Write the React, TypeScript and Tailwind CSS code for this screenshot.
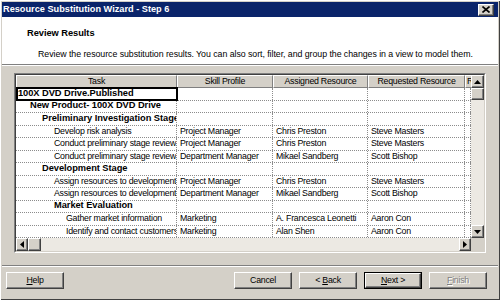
import React from 'react'

type Row = {
  task: string
  level: number
  bold?: boolean
  selected?: boolean
  skill?: string
  assigned?: string
  requested?: string
}

const rows: Row[] = [
  { task: '100X DVD Drive.Published', level: 0, bold: true, selected: true },
  { task: 'New Product- 100X DVD Drive', level: 1, bold: true },
  { task: 'Preliminary Investigation Stage', level: 2, bold: true },
  { task: 'Develop risk analysis', level: 3, skill: 'Project Manager', assigned: 'Chris Preston', requested: 'Steve Masters' },
  { task: 'Conduct preliminary stage review', level: 3, skill: 'Project Manager', assigned: 'Chris Preston', requested: 'Steve Masters' },
  { task: 'Conduct preliminary stage review', level: 3, skill: 'Department Manager', assigned: 'Mikael Sandberg', requested: 'Scott Bishop' },
  { task: 'Development Stage', level: 2, bold: true },
  { task: 'Assign resources to development', level: 3, skill: 'Project Manager', assigned: 'Chris Preston', requested: 'Steve Masters' },
  { task: 'Assign resources to development', level: 3, skill: 'Department Manager', assigned: 'Mikael Sandberg', requested: 'Scott Bishop' },
  { task: 'Market Evaluation', level: 3, bold: true },
  { task: 'Gather market information', level: 4, skill: 'Marketing', assigned: 'A. Francesca Leonetti', requested: 'Aaron Con' },
  { task: 'Identify and contact customers', level: 4, skill: 'Marketing', assigned: 'Alan Shen', requested: 'Aaron Con' },
]

const indent = ['pl-[2px]', 'pl-[14px]', 'pl-[26px]', 'pl-[38px]', 'pl-[50px]']

// regular Tahoma-ish text, bold variant is a touch wider
const reg = 'text-[8.8px] tracking-[-0.25px]'
const bld = 'font-bold text-[9.3px] tracking-[-0.05px]'

const raised =
  'bg-[#d4d0c8] border border-t-white border-l-white border-r-[#404040] border-b-[#404040] shadow-[inset_-1px_-1px_0_#808080]'

function Arrow({ dir }: { dir: 'up' | 'down' | 'left' | 'right' }) {
  const pts = {
    up: '0,4 3.5,0 7,4',
    down: '0,0 3.5,4 7,0',
    left: '4,0 0,3.5 4,7',
    right: '0,0 4,3.5 0,7',
  }[dir]
  const vertical = dir === 'up' || dir === 'down'
  return (
    <svg width={vertical ? 7 : 4} height={vertical ? 4 : 7} viewBox={vertical ? '0 0 7 4' : '0 0 4 7'}>
      <polygon points={pts} fill="#000" />
    </svg>
  )
}

function Cell({ w, children, bold, className = '' }: { w: string; children?: React.ReactNode; bold?: boolean; className?: string }) {
  return (
    <div
      className={`${w} h-full shrink-0 overflow-hidden whitespace-nowrap border-r border-dotted border-r-[#8c8c8c] flex items-center ${
        bold ? bld : reg
      } ${className}`}
    >
      {children}
    </div>
  )
}

function HeaderCell({ w, label }: { w: string; label: string }) {
  return (
    <div className={`${w} h-full shrink-0 overflow-hidden whitespace-nowrap flex items-center justify-center ${reg} bg-[#d4d0c8] border-t border-l border-t-white border-l-white border-r border-b border-r-[#808080] border-b-[#808080]`}>
      {label}
    </div>
  )
}

function Button({ children, isDefault, disabled }: { children: React.ReactNode; isDefault?: boolean; disabled?: boolean }) {
  const inner = (
    <div
      className={`${raised} h-full w-full flex items-center justify-center ${reg} ${
        disabled ? 'text-[#808080] [text-shadow:1px_1px_0_#ffffff]' : 'text-black'
      }`}
    >
      <span className="whitespace-pre">{children}</span>
    </div>
  )
  if (isDefault) {
    return <div className="w-[58px] h-[17px] border border-black">{inner}</div>
  }
  return <div className="w-[58px] h-[17px]">{inner}</div>
}

export default function App() {
  return (
    <div
      className="w-[500px] h-[300px] bg-[#d4d0c8] p-[2px] flex flex-col overflow-hidden text-black shadow-[inset_1px_1px_0_#ffffff,inset_-1px_-1px_0_#404040]"
      style={{ fontFamily: '"Liberation Sans", Arial, sans-serif' }}
    >
      {/* Title bar */}
      <div className="h-[15px] shrink-0 bg-[#0a246a] flex items-center justify-between pl-[1px] pr-[4px]">
        <span className="text-white font-bold text-[9.2px] leading-none">Resource Substitution Wizard - Step 6</span>
        <div className={`${raised} w-[16px] h-[12px] flex items-center justify-center`}>
          <svg width="8" height="7" viewBox="0 0 8 7">
            <path d="M0.5 0.5 L7.5 6.5 M7.5 0.5 L0.5 6.5" stroke="#000" strokeWidth="1.6" />
          </svg>
        </div>
      </div>

      {/* White header */}
      <div className="h-[48px] shrink-0 bg-white border-b border-b-[#808080] shadow-[0_1px_0_#ffffff] flex flex-col">
        <div className={`pl-[25px] pt-[10px] ${bld} leading-[12px]`}>Review Results</div>
        <div className="pl-[36px] pt-[9px] text-[8.8px] tracking-[-0.05px] leading-[12px] whitespace-nowrap">
          Review the resource substitution results. You can also sort, filter, and group the changes in a view to model them.
        </div>
      </div>

      {/* Table */}
      <div className="mt-[8px] ml-[12px] w-[472px] h-[180px] shrink-0 border border-t-[#808080] border-l-[#808080] border-r-white border-b-white">
        <div className="w-full h-full border border-t-[#404040] border-l-[#404040] border-r-[#d4d0c8] border-b-[#d4d0c8] flex flex-col">
          <div className="flex h-[163px]">
            <div className="w-[455px] h-full bg-white flex flex-col overflow-hidden">
              <div className="h-[13px] flex shrink-0">
                <HeaderCell w="w-[161px]" label="Task" />
                <HeaderCell w="w-[96px]" label="Skill Profile" />
                <HeaderCell w="w-[95px]" label="Assigned Resource" />
                <HeaderCell w="w-[97px]" label="Requested Resource" />
                <div className={`w-[6px] h-full shrink-0 overflow-hidden whitespace-nowrap ${reg} flex items-center pl-[1px] bg-[#d4d0c8] border-t border-l border-t-white border-l-white border-b border-b-[#808080]`}>
                  R
                </div>
              </div>
              {rows.map((r, i) => (
                <div key={i} className="h-[12.5px] flex shrink-0 border-b border-dotted border-b-[#8c8c8c] relative">
                  <Cell w="w-[161px]" bold={r.bold} className={indent[r.level]}>
                    {r.task}
                  </Cell>
                  <Cell w="w-[96px]" className="pl-[3px]">{r.skill}</Cell>
                  <Cell w="w-[95px]" className="pl-[3px]">{r.assigned}</Cell>
                  <Cell w="w-[97px]" className="pl-[3px]">{r.requested}</Cell>
                  <Cell w="w-[6px]" />
                  {r.selected && (
                    <div className="absolute left-0 top-[-1px] w-[162px] h-[14px] border-2 border-black pointer-events-none" />
                  )}
                </div>
              ))}
            </div>
            {/* Vertical scrollbar */}
            <div className="w-[13px] h-full flex flex-col bg-[#ece9e3]">
              <div className={`${raised} h-[13px] shrink-0 flex items-center justify-center`}>
                <Arrow dir="up" />
              </div>
              <div className={`${raised} h-[12px] shrink-0`} />
              <div className="flex-1" />
              <div className={`${raised} h-[13px] shrink-0 flex items-center justify-center`}>
                <Arrow dir="down" />
              </div>
            </div>
          </div>
          {/* Horizontal scrollbar */}
          <div className="flex h-[13px]">
            <div className="w-[455px] h-full flex bg-[#ece9e3]">
              <div className={`${raised} w-[12px] h-full shrink-0 flex items-center justify-center`}>
                <Arrow dir="left" />
              </div>
              <div className={`${raised} w-[13px] h-full shrink-0`} />
              <div className="flex-1" />
              <div className={`${raised} w-[12px] h-full shrink-0 flex items-center justify-center`}>
                <Arrow dir="right" />
              </div>
            </div>
            <div className="w-[13px] h-full bg-[#d4d0c8]" />
          </div>
        </div>
      </div>

      {/* Separator */}
      <div className="mt-[12px] h-[2px] shrink-0 border-t border-t-[#808080] border-b border-b-white" />

      {/* Buttons */}
      <div className="mt-[5px] flex items-center px-[4px]">
        <Button>
          <span className="underline">H</span>elp
        </Button>
        <div className="flex-1" />
        <div className="flex items-center gap-[7px] pr-[7px]">
          <Button>Cancel</Button>
          <Button>
            {'< '}
            <span className="underline">B</span>ack
          </Button>
          <Button isDefault>
            <span className="underline">N</span>
            {'ext >'}
          </Button>
          <Button disabled>
            <span className="underline">F</span>inish
          </Button>
        </div>
      </div>
    </div>
  )
}
